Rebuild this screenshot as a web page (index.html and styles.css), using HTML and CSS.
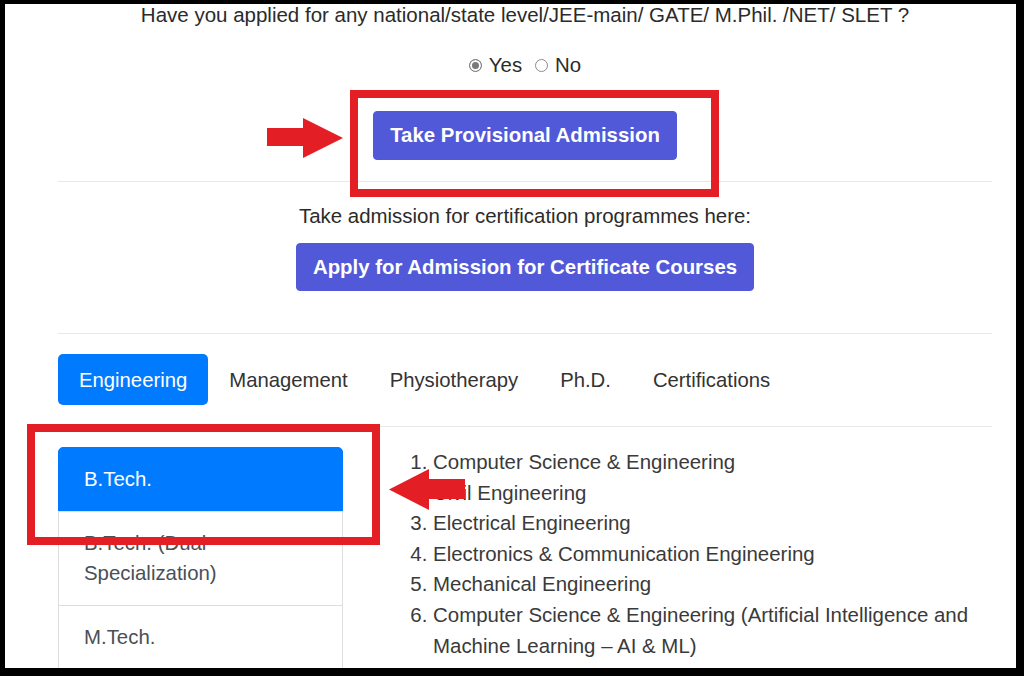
FILE: index.html
```html
<!DOCTYPE html>
<html lang="en">
<head>
<meta charset="utf-8">
<title>Admission</title>
<link rel="stylesheet" href="styles.css">
</head>
<body>
<div class="frame">
  <main class="container">
    <section class="apply">
      <p class="question">Have you applied for any national/state level/JEE-main/ GATE/ M.Phil. /NET/ SLET ?</p>
      <div class="radios">
        <label class="radio"><input type="radio" name="applied" checked><span>Yes</span></label>
        <label class="radio"><input type="radio" name="applied"><span>No</span></label>
      </div>
      <button class="btn btn-provisional" type="button">Take Provisional Admission</button>
    </section>
    <hr class="rule rule-1">
    <section class="cert">
      <p class="cert-text">Take admission for certification programmes here:</p>
      <button class="btn btn-cert" type="button">Apply for Admission for Certificate Courses</button>
    </section>
    <hr class="rule rule-2">
    <nav class="tabs">
      <a class="tab active">Engineering</a>
      <a class="tab">Management</a>
      <a class="tab">Physiotherapy</a>
      <a class="tab">Ph.D.</a>
      <a class="tab">Certifications</a>
    </nav>
    <hr class="rule rule-3">
    <div class="programs">
      <div class="list-group">
        <a class="list-item active">B.Tech.</a>
        <a class="list-item">B.Tech. (Dual Specialization)</a>
        <a class="list-item">M.Tech.</a>
      </div>
      <ol class="courses">
        <li>Computer Science &amp; Engineering</li>
        <li>Civil Engineering</li>
        <li>Electrical Engineering</li>
        <li>Electronics &amp; Communication Engineering</li>
        <li>Mechanical Engineering</li>
        <li>Computer Science &amp; Engineering (Artificial Intelligence and Machine Learning – AI &amp; ML)</li>
      </ol>
    </div>
  </main>

  <div class="mark mark-box-1"></div>
  <svg class="mark mark-arrow-1" width="76" height="40" viewBox="0 0 76 40"><polygon points="0,10 36,10 36,0 76,20 36,40 36,28 0,28" fill="#e41e25"/></svg>
  <div class="mark mark-box-2"></div>
  <svg class="mark mark-arrow-2" width="76" height="41" viewBox="0 0 76 41"><polygon points="0,20.5 40,0 40,10 76,10 76,30 40,30 40,41" fill="#e41e25"/></svg>
</div>
</body>
</html>
```

FILE: styles.css
```css
* { box-sizing: border-box; }

html, body {
  margin: 0;
  padding: 0;
  background: #000;
  height: 676px;
  overflow: hidden;
}

body {
  font-family: "Liberation Sans", Arial, sans-serif;
  font-size: 20.4px;
  color: #2f2f2f;
}

.frame {
  position: relative;
  margin: 4px 8px 0 5px;
  height: 664px;
  background: #fff;
  overflow: hidden;
}

.container {
  margin-left: 53px;
  width: 934px;
  display: flex;
  flex-direction: column;
}

.apply {
  display: flex;
  flex-direction: column;
  align-items: center;
}

.question {
  margin: 0;
  font-size: 20.5px;
  line-height: 22px;
  text-align: center;
  color: #2b2b2b;
}

.radios {
  margin-top: 25.5px;
  display: flex;
  gap: 13px;
  font-size: 20.4px;
  line-height: 27px;
  color: #2b2b2b;
}

.radio {
  display: flex;
  align-items: center;
  gap: 7px;
}

.radio input {
  appearance: none;
  -webkit-appearance: none;
  margin: 0;
  width: 13px;
  height: 13px;
  border: 1px solid #8c8c8c;
  border-radius: 50%;
  background: #fff;
}

.radio input:checked {
  border-color: #7a7a7a;
  background: #7a7a7a;
  box-shadow: inset 0 0 0 2px #fff;
}

.btn {
  font-family: "Liberation Sans", Arial, sans-serif;
  font-weight: bold;
  font-size: 20.4px;
  color: #fff;
  background: #5159d8;
  border: 1px solid #5159d8;
  border-radius: 4px;
  cursor: pointer;
}

.btn-provisional {
  margin-top: 32.5px;
  padding: 9px 16.5px;
  line-height: 29px;
}

.rule {
  margin: 0;
  border: 0;
  border-top: 1px solid #e8e8e8;
}

.rule-1 { margin-top: 21px; }
.rule-2 { margin-top: 42px; }
.rule-3 { margin-top: 21px; }

.cert {
  margin-top: 19px;
  display: flex;
  flex-direction: column;
  align-items: center;
}

.cert-text {
  margin: 0 0 12px;
  font-size: 20.45px;
  line-height: 30px;
  color: #2b2b2b;
}

.btn-cert {
  padding: 8.5px 16px;
  line-height: 29px;
}

.tabs {
  margin-top: 20px;
  display: flex;
}

.tab {
  display: block;
  padding: 10.5px 21px;
  font-size: 20.3px;
  line-height: 30px;
  color: #333;
  border-radius: 5px;
}

.tab.active {
  background: #007bff;
  color: #fff;
}

.programs {
  margin-top: 20px;
  display: flex;
  gap: 50px;
}

.list-group {
  width: 285px;
  flex: none;
  display: flex;
  flex-direction: column;
}

.list-item {
  display: block;
  padding: 16px 25px;
  font-size: 20.4px;
  line-height: 30.5px;
  color: #495057;
  border: 1px solid #dedede;
  margin-bottom: -1px;
}

.list-item:first-child {
  border-top-left-radius: 5px;
  border-top-right-radius: 5px;
}

.list-item.active {
  background: #007bff;
  border-color: #007bff;
  color: #fff;
}

.courses {
  margin: 0;
  padding-left: 40px;
  flex: 1;
  font-size: 20.45px;
  line-height: 30.6px;
  color: #3a3a3a;
}

.mark {
  position: absolute;
}

.mark-box-1 {
  left: 345px;
  top: 86px;
  width: 369px;
  height: 107px;
  border: 8px solid #e41e25;
}

.mark-arrow-1 {
  left: 262px;
  top: 114px;
}

.mark-box-2 {
  left: 22px;
  top: 420px;
  width: 353px;
  height: 121px;
  border: 8px solid #e41e25;
}

.mark-arrow-2 {
  left: 384px;
  top: 465px;
}
```
